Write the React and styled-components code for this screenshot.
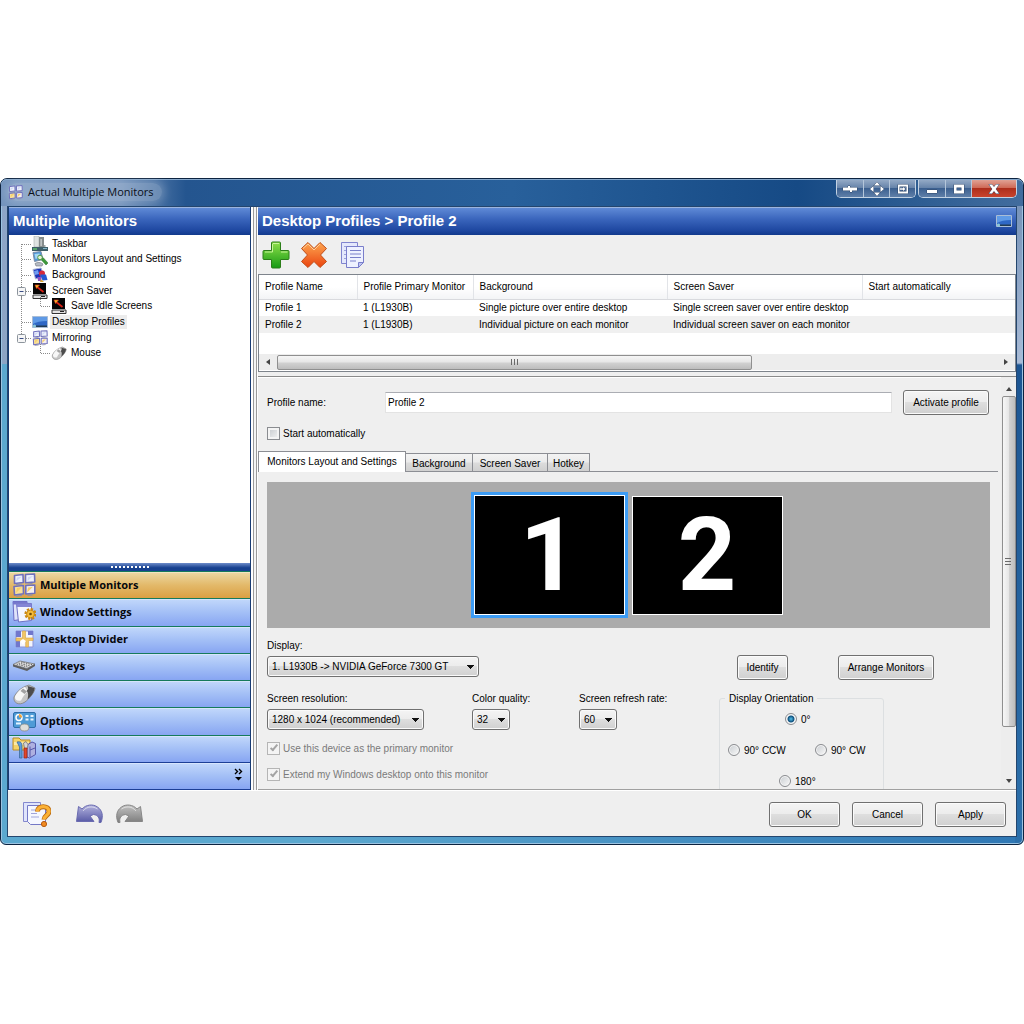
import React, { useState } from "react";
import styled, { createGlobalStyle, css } from "styled-components";

const uiFont = '"Liberation Sans", Arial, sans-serif';
const digitFont = 'Roboto, "Liberation Sans", Arial, sans-serif';
const segoe = '"Open Sans", "Noto Sans", sans-serif';
const buttonFace = "linear-gradient(#f4f4f4 0%, #ececec 48%, #dedede 50%, #d0d0d0 100%)";
const blueBar = "linear-gradient(#5f8ad6 0%, #3b66bd 40%, #1d469f 85%, #123a8c 100%)";

const GlobalStyle = createGlobalStyle`
  *, *::before, *::after { box-sizing: border-box; }
  body { margin: 0; background: #fff; font: 10px/13px ${uiFont}; color: #000; }
  button, input, select { font: inherit; color: inherit; margin: 0; }
  svg { display: block; flex: none; }
`;

const Page = styled.div`
  padding: 178px 0;
`;

const Window = styled.div`
  display: flex;
  flex-direction: column;
  border: 1px solid #0c2340;
  border-radius: 7px 7px 6px 6px;
  background:
    linear-gradient(90deg, #7fb3d6 0 1px, transparent 1px),
    linear-gradient(#8ea6c8 0, #8ca4c4 185px, transparent 185px) left / 50% 100% no-repeat,
    linear-gradient(#6f8db4 0, #a9bbd6 184px, #1c5592 186px, #2c70ab 100%) right / 8px 100% no-repeat,
    linear-gradient(90deg, #5ba8cf, #5ba8cf 30%, #2f77b4);
  box-shadow: inset 0 0 0 1px #9cc3e0;
`;

const TitleBar = styled.header`
  display: flex;
  align-items: center;
  justify-content: space-between;
  height: 27px;
  padding: 0 6px 2px 7px;
  border-radius: 6px 6px 0 0;
  border-top: 1px solid #86a8cc;
  background: linear-gradient(90deg, #7494bd 0, #6f8fb9 120px, #24558f 185px, #28609b 50%, #164a85 78%, #426d9e 100%);
`;

const Caption = styled.h1`
  display: flex;
  align-items: center;
  gap: 5px;
  margin: 0;
  padding: 0 8px 0 0;
  border-radius: 10px;
  font: 11px/18px ${segoe};
  color: #0a0f18;
  background: rgba(255, 255, 255, 0.22);
  box-shadow: 0 0 8px 3px rgba(255, 255, 255, 0.2);
`;

const CaptionButtons = styled.div`
  display: flex;
  align-self: flex-start;
  gap: 2px;
`;

const CaptionGroup = styled.div`
  display: flex;
  border: 1px solid #c3d2e3;
  border-top: 0;
  border-radius: 0 0 5px 5px;
  overflow: hidden;
`;

const CaptionButton = styled.button`
  display: flex;
  align-items: center;
  justify-content: center;
  width: ${(p) => (p.$close ? 45 : 26)}px;
  height: 17px;
  padding: 0;
  border: 0;
  border-left: 1px solid #b4c6da;
  background: ${(p) =>
    p.$close
      ? "linear-gradient(#e0a294 0%, #cf6b58 45%, #ad2f1c 50%, #c9442d 100%)"
      : "linear-gradient(#93a9c5 0%, #6784aa 45%, #3c6090 50%, #5f7fa8 100%)"};
  &:first-child { border-left: 0; }
`;

const Client = styled.div`
  display: flex;
  flex-direction: column;
  margin: 0 6px 7px;
  border: 1px solid #24466e;
  background: #efefef;
`;

const Columns = styled.div`
  display: flex;
  height: 583px;
`;

const Sidebar = styled.aside`
  display: flex;
  flex-direction: column;
  flex: none;
  width: 243px;
  border: solid #173a72;
  border-width: 0 1px;
  background: #fff;
`;

const SplitBar = styled.div`
  flex: none;
  width: 7px;
  border: solid #fff;
  border-width: 0 1px 0 2px;
  background: linear-gradient(90deg, #9a9a9a 0 1px, #f4f4f4 1px 3px, #9a9a9a 3px);
`;

const PanelTitle = styled.h2`
  display: flex;
  align-items: center;
  justify-content: space-between;
  flex: none;
  height: 28px;
  margin: 0;
  padding: 0 4px 2px;
  border-top: 1px solid #9bb4de;
  font: bold 15px/20px ${uiFont};
  color: #fff;
  background: ${blueBar};
`;

const TreeBody = styled.div`
  flex: 1;
  padding: 1px 0 0 7px;
`;

const TreeList = styled.ul`
  display: grid;
  grid-auto-rows: 1fr;
  height: 125px;
  margin: 0;
  padding: 0;
  list-style: none;
`;

const TreeItem = styled.li`
  display: flex;
  align-items: center;
  min-height: 0;
  svg { margin: -1px 0; }
`;

const TreeLabel = styled.span`
  margin-left: 2px;
  padding: 0 2px;
  line-height: 14px;
  background: ${(p) => (p.$selected ? "#ececec" : "transparent")};
`;

const Grip = styled.div`
  display: flex;
  justify-content: center;
  align-items: center;
  flex: none;
  height: 8px;
  background: linear-gradient(#6d8cca, #16408f 60%);
`;

const NavList = styled.nav`
  display: flex;
  flex-direction: column;
  flex: none;
  height: 219px;
`;

const NavButton = styled.button`
  display: flex;
  align-items: center;
  flex: 1;
  min-height: 0;
  gap: 4px;
  padding: 0 3px 1px;
  border: 0;
  border-top: 1px solid #167a5c;
  box-shadow: inset 0 1px 0 rgba(255, 255, 255, 0.35);
  font: bold 11px/16px ${segoe};
  color: #05070c;
  text-align: left;
  background: ${(p) =>
    p.$active
      ? "linear-gradient(#ecd9a5 0%, #e3b96a 50%, #dba044 100%)"
      : "linear-gradient(#c2d8fb 0%, #a3bff6 50%, #87a5f2 100%)"};
`;

const NavMore = styled(NavButton)`
  justify-content: flex-end;
  padding-right: 6px;
  border-top-color: #1c3f96;
  border-bottom: 1px solid #1c3f96;
`;

const Main = styled.main`
  display: flex;
  flex-direction: column;
  flex: 1;
  min-width: 0;
`;

const Toolbar = styled.div`
  display: flex;
  align-items: center;
  gap: 10px;
  flex: none;
  height: 39px;
  padding: 0 4px;
`;

const ToolButton = styled.button`
  display: flex;
  padding: 0;
  border: 0;
  background: transparent;
`;

const ListBox = styled.section`
  display: flex;
  flex-direction: column;
  flex: none;
  height: 98px;
  padding-bottom: 1px;
  border: 1px solid #7e848c;
  background: #fff;
`;

const ListScroll = styled.div`
  flex: 1;
  overflow: hidden;
`;

const Table = styled.table`
  width: 100%;
  table-layout: fixed;
  border-collapse: collapse;
  th, td {
    padding: 0 0 0 6px;
    font-weight: normal;
    text-align: left;
    white-space: nowrap;
  }
  th {
    height: 24px;
    border-right: 1px solid #e2e4e8;
    border-bottom: 1px solid #d9dade;
    background: linear-gradient(#fff 50%, #f3f4f6);
  }
  th:last-child { border-right: 0; }
`;

const Col = styled.col`
  width: ${(p) => (p.$w ? `${p.$w}px` : "auto")};
`;

const Row = styled.tr`
  height: 17px;
  background: ${(p) => (p.$selected ? "#f0f0f0" : "#fff")};
`;

const HScroll = styled.div`
  display: flex;
  align-items: center;
  flex: none;
  height: 16px;
  background: #ededed;
`;

const ScrollArrow = styled.button`
  display: flex;
  align-items: center;
  justify-content: center;
  flex: none;
  width: ${(p) => (p.$vertical ? 15 : 18)}px;
  height: 15px;
  padding: 0;
  border: 0;
  background: transparent;
`;

const HTrack = styled.div`
  flex: 1;
`;

const Thumb = styled.div`
  display: flex;
  align-items: center;
  justify-content: center;
  border: 1px solid #8f8f8f;
  border-radius: 2px;
  ${(p) =>
    p.$vertical
      ? css`
          width: 14px;
          height: 331px;
          background: linear-gradient(90deg, #f6f6f6 0%, #e6e6e6 48%, #d2d2d2 52%, #bdbdbd 100%);
        `
      : css`
          width: 66%;
          height: 15px;
          background: linear-gradient(#f6f6f6 0%, #e6e6e6 48%, #d2d2d2 52%, #bdbdbd 100%);
        `}
`;

const FormArea = styled.section`
  display: flex;
  flex: 1;
  min-height: 0;
  margin-top: 4px;
  border-top: 1px solid #8b8b8b;
  border-bottom: 1px solid #a0a0a0;
  box-shadow: inset 0 1px 0 #fff;
`;

const Form = styled.form`
  flex: 1;
  min-width: 0;
  overflow: hidden;
  padding-top: 13px;
`;

const VScroll = styled.div`
  display: flex;
  flex-direction: column;
  align-items: center;
  justify-content: space-between;
  flex: none;
  width: 15px;
  margin-left: 3px;
  padding: 4px 0 1px;
  background: #ededed;
`;

const VTrack = styled.div`
  flex: 1;
`;

const NameRow = styled.div`
  display: flex;
  align-items: center;
  padding: 0 9px;
`;

const NameLabel = styled.label`
  width: 118px;
`;

const TextField = styled.input`
  flex: 1;
  min-width: 0;
  height: 21px;
  padding: 0 2px;
  border: 1px solid #e3e3e3;
  border-top-color: #abadb3;
  background: #fff;
`;

const Button = styled.button`
  height: 25px;
  padding: 0;
  width: ${(p) => p.$w}px;
  border: 1px solid #707070;
  border-radius: 3px;
  box-shadow: inset 0 0 0 1px #fbfbfb;
  background: ${buttonFace};
  white-space: nowrap;
`;

const ActivateButton = styled(Button)`
  margin-left: 11px;
`;

const CheckLabel = styled.label`
  display: flex;
  align-items: center;
  gap: 3px;
  height: 14px;
  color: ${(p) => (p.$disabled ? "#7a7a7a" : "#000")};
`;

const checkMark = css`
  &:checked::before {
    content: "";
    width: 4px;
    height: 8px;
    margin-bottom: 2px;
    border: solid #a4a4a4;
    border-width: 0 2px 2px 0;
    transform: rotate(40deg);
  }
`;

const CheckBox = styled.input.attrs({ type: "checkbox" })`
  appearance: none;
  display: flex;
  align-items: center;
  justify-content: center;
  width: 13px;
  height: 13px;
  border: 1px solid ${(p) => (p.disabled ? "#b5b5b5" : "#8a8c90")};
  box-shadow: inset 0 0 0 2px #f4f4f4;
  background: ${(p) => (p.disabled ? "#f4f4f4" : "linear-gradient(135deg, #c4c8cc, #f6f6f6)")};
  ${checkMark}
`;

const AutoStart = styled.div`
  padding: 11px 9px;
`;

const Tabs = styled.div`
  display: flex;
  align-items: flex-end;
  height: 21px;
  border-bottom: 1px solid #8c8e94;
`;

const Tab = styled.button`
  height: ${(p) => (p.$active ? 21 : 18)}px;
  width: ${(p) => p.$w}px;
  margin-bottom: ${(p) => (p.$active ? -1 : 0)}px;
  padding: ${(p) => (p.$active ? "0 0 1px" : "1px 0 0")};
  border: 1px solid #8c8e94;
  border-bottom: 0;
  margin-right: -1px;
  background: ${(p) => (p.$active ? "#fff" : "linear-gradient(#f3f3f3 0%, #ebebeb 48%, #dcdcdc 52%, #d0d0d0 100%)")};
  white-space: nowrap;
`;

const Arrangement = styled.div`
  display: flex;
  align-items: center;
  justify-content: center;
  gap: 4px;
  height: 146px;
  margin: 10px 8px 11px 9px;
  padding-right: 4px;
  background: #ababab;
`;

const Monitor = styled.button`
  display: flex;
  align-items: center;
  justify-content: center;
  width: ${(p) => (p.$selected ? 157 : 151)}px;
  height: ${(p) => (p.$selected ? 126 : 119)}px;
  padding: 0;
  border: ${(p) => (p.$selected ? "3px solid #3c9cf5" : "1px solid #fff")};
  box-shadow: ${(p) => (p.$selected ? "inset 0 0 0 1px #fff" : "none")};
  background: #000;
  color: #fff;
  font: bold 102px/118px ${digitFont};
`;

const Settings = styled.div`
  padding: 0 9px;
`;

const DisplayRow = styled.div`
  display: flex;
  align-items: flex-end;
  margin-bottom: 15px;
`;

const Field = styled.div`
  display: flex;
  flex-direction: column;
  align-items: flex-start;
  gap: 4px;
  width: ${(p) => (p.$w ? `${p.$w}px` : "auto")};
`;

const Select = styled.select`
  appearance: none;
  width: ${(p) => p.$w}px;
  height: 21px;
  padding: 0 12px 0 4px;
  border: 1px solid #707070;
  border-radius: 3px;
  box-shadow: inset 0 0 0 1px #fafafa;
  background:
    linear-gradient(#111, #111) right 4px top 8px / 7px 1px no-repeat,
    linear-gradient(#111, #111) right 5px top 9px / 5px 1px no-repeat,
    linear-gradient(#111, #111) right 6px top 10px / 3px 1px no-repeat,
    linear-gradient(#111, #111) right 7px top 11px / 1px 1px no-repeat,
    ${buttonFace};
`;

const DisplayButtons = styled.div`
  display: flex;
  gap: 50px;
  margin: 0 55px -3px auto;
`;

const ModeRow = styled.div`
  display: flex;
  justify-content: space-between;
  align-items: flex-start;
`;

const ModeColumn = styled.div`
  display: flex;
  flex-direction: column;
  gap: 12px;
`;

const ModeFields = styled.div`
  display: flex;
  margin-bottom: -1px;
`;

const Orientation = styled.fieldset`
  display: grid;
  grid-template-columns: 87px 1fr;
  row-gap: 17px;
  width: 165px;
  height: 130px;
  margin: 0 105px 0 0;
  padding: 7px 0 0 8px;
  align-content: start;
  border: 1px solid #dcdfe1;
  border-radius: 3px;
  legend { margin-left: -3px; padding: 0 4px; }
`;

const RadioLabel = styled.label`
  display: flex;
  align-items: center;
  gap: 4px;
  height: 14px;
  ${(p) => p.$indent && css`grid-column: 1 / -1; padding-left: ${p.$indent}px;`}
`;

const Radio = styled.input.attrs({ type: "radio" })`
  appearance: none;
  width: 12px;
  height: 12px;
  border: 1px solid #8a8c90;
  border-radius: 50%;
  box-shadow: inset 0 0 0 1px #f6f6f6;
  background: linear-gradient(135deg, #c8ccd0, #fafafa);
  &:checked {
    background: radial-gradient(circle at 5px 5px, #55c3ee 0, #0f4f7c 3px, #f3f6f8 4px);
  }
`;

const Footer = styled.footer`
  display: flex;
  align-items: center;
  justify-content: space-between;
  height: 46px;
  padding: 2px 10px 0 15px;
  border-top: 1px solid #fff;
`;

const FooterTools = styled.div`
  display: flex;
  align-items: center;
  button:nth-child(2) { margin: 0 11px 0 25px; }
`;

const DialogButtons = styled.div`
  display: flex;
  gap: 12px;
`;

/* ---------- drawings ---------- */

const Dots = ({ d }) => <path d={d} stroke="#8a8a8a" strokeDasharray="1 1" fill="none" />;

function Branch({ kind }) {
  return (
    <svg width="16" height="18" viewBox="0 0 16 18">
      <Dots d={kind === "first" ? "M5.5 9V18" : kind === "last" ? "M5.5 0V9" : "M5.5 0V18"} />
      <Dots d="M6 9.5H16" />
      {(kind === "last" || kind === "open") && (
        <>
          <rect x="1.5" y="5.5" width="8" height="8" rx="1" fill="#f6f6f6" stroke="#8c949c" />
          <path d="M3.5 9.5h4" stroke="#3b4f86" />
        </>
      )}
    </svg>
  );
}

function ChildBranch({ trunk }) {
  return (
    <svg width="35" height="18" viewBox="0 0 35 18">
      {trunk && <Dots d="M5.5 0V18" />}
      <Dots d="M24.5 0V9" />
      <Dots d="M25 9.5H35" />
    </svg>
  );
}

const Svg16 = ({ children, size = 16 }) => (
  <svg width={size} height={size} viewBox="0 0 16 16">
    {children}
  </svg>
);

const TaskbarIcon = () => (
  <Svg16>
    <path d="M2 0h5v11H2z" fill="#dfe3e2" stroke="#a9b0b0" strokeWidth=".6" />
    <path d="M7 1h5v10H7z" fill="#858b8b" />
    <path d="M8.500 3h1.200v7H8.500z" fill="#d6dada" />
    <path d="M12 9h1.500v2H12z" fill="#9ea6a6" />
    <path d="M0 11h16v4H0z" fill="#3e5e68" />
    <path d="M1 12h4v2H1z" fill="#57a56c" />
    <path d="M11 12h4v1h-4z" fill="#85b5c8" />
  </Svg16>
);
const LayoutIcon = () => (
  <Svg16>
    <path d="M1 1.500 9 .5l2 8-8.500 2z" fill="#4f97d8" stroke="#7d8ca3" />
    <path d="M2.500 3 7.500 2.500l.8 4-4.800 1.500z" fill="#a6d8f2" />
    <path d="M3 12.500c2-1.500 6-1.500 8 .5l-1 2H4z" fill="#b5bbc4" stroke="#6d747c" strokeWidth=".6" />
    <path d="M8.500 8l5.500 6 2-2-5-5.500z" fill="#3f9a3a" stroke="#27702a" strokeWidth=".5" />
    <circle cx="8" cy="6.500" r="2.300" fill="#e7f4d6" stroke="#4f9a48" />
  </Svg16>
);
const BackgroundIcon = () => (
  <Svg16>
    <path d="M1 2.500 9 1l3 8-8.500 3z" fill="#1c34b8" stroke="#a7b2d6" />
    <path d="M2 4l4-1 1 4-4 1z" fill="#6f9cf0" />
    <circle cx="10" cy="6.500" r="3" fill="#d62a3c" />
    <path d="M8 7.500h6l1.500 5.500-5 .5z" fill="#2459d2" />
    <path d="M5.500 10h4L9 14H6z" fill="#8f4fc0" />
    <path d="M9 12l3 3H8z" fill="#d8a83a" />
  </Svg16>
);
const SaverIcon = () => (
  <Svg16>
    <path d="M1 0h13v11H1z" fill="#050505" />
    <path d="M4.500 3.500l7 5.500" stroke="#d82014" strokeWidth="1.800" />
    <path d="M3 2h4.500L4.500 5.500z" fill="#f6c82a" stroke="#e0301c" strokeWidth=".6" />
    <path d="M1 12h14v3.500H1z" fill="#e4e4e4" stroke="#333" />
    <path d="M9 13.500h4" stroke="#222" />
  </Svg16>
);
const DesktopIcon = ({ size }) => (
  <Svg16 size={size}>
    <path d="M.5 2.500h15v11H.5z" fill="#2f68c6" stroke="#a9bdd6" />
    <path d="M1 3h14v4C9 7 4 8 1 10z" fill="#5f9ae6" />
    <path d="M4 11.500h11V13H4z" fill="#223c55" />
    <circle cx="2.500" cy="12" r="1.600" fill="#8cc8d8" />
  </Svg16>
);
const FourScreens = ({ size = 16 }) => (
  <svg width={size} height={size} viewBox="0 0 24 24">
    <g stroke="#6f70bd" strokeWidth="1.600" strokeLinejoin="round">
      <path d="M2.500 2.500 11 1.500l.3 8-8.800 1z" fill="#eef1fb" />
      <path d="M13.500 1.500 22.500 1l.3 8-9.300.8z" fill="#eef1fb" />
      <path d="M2 13.500l9.300-1 .2 8.300L2.500 22z" fill="#f8e09a" />
      <path d="M13.800 12.500l9-.5v8.200l-9 .8z" fill="#f4eff0" />
    </g>
    <path d="M4 8.500 5 4.500l5-1zM15.500 8l.5-4 5-1z" fill="#cdd8f5" />
    <path d="M4 20l1-5 5-1zM15 19.500l1-5 5-.7z" fill="#f6cf6c" />
    <path d="M4 11.700l6-.7M15.500 11l5-.5M4 23.200l6-.7M15.500 22.300l5-.5" stroke="#8f90a8" strokeWidth="1.200" />
  </svg>
);
const MouseIcon = ({ size = 16 }) => (
  <svg width={size} height={size} viewBox="0 0 24 24">
    <path d="M2 15C5 9 10 5 17 3l6 3c0 4-6 11-10 14-6 4-12 1-11-5z" fill="#c6c6c6" stroke="#808080" strokeWidth=".8" />
    <path d="M3 14.500C6 9 9 6.500 13 5l3 4.500c-3 2-5 5-7 9-4 1-6.500-1-6-4z" fill="#f7f7f7" />
    <path d="M15.500 4l7 2c0 4-3 8-7 11.500 1-4.500 1-7-1-8.500 2-1.500 2-3 1-5z" fill="#4c4c4c" />
    <path d="M11 6.500l4 3-2.500 2.500-4-3z" fill="#a2a2a2" />
  </svg>
);
const WindowsIcon = () => (
  <svg width="24" height="24" viewBox="0 0 24 24">
    <path d="M1 1.500h14v17l-13 2z" fill="#dfe3fa" stroke="#6b6bc4" />
    <path d="M1 1.500h14v3H1z" fill="#7577cd" />
    <path d="M4.500 3.500h15v17l-13 1.500z" fill="#f3f5ff" stroke="#7072c4" />
    <path d="M4.500 3.500h15v3.500h-15z" fill="#8385d6" />
    <circle cx="18.500" cy="14" r="4.800" fill="none" stroke="#c98712" strokeWidth="2.500" strokeDasharray="2.300 1.400" />
    <circle cx="18.500" cy="14" r="3.900" fill="#f5bd3c" stroke="#c98712" />
    <circle cx="18.500" cy="14" r="1.300" fill="#6c4a08" />
  </svg>
);
const DividerIcon = () => (
  <svg width="24" height="24" viewBox="0 0 24 24">
    <path d="M4 4h17v16H4z" fill="#f2f4fd" stroke="#8e94d6" />
    <path d="M4 4h5v6H4zM16 4h5v4h-5zM4 14h4v6H4z" fill="#7077cc" />
    <path d="M10.500 4h3v7H21v2.500h-4.500V20h-2.800v-6H4v-3h6.500z" fill="#f0c566" stroke="#d7a445" strokeWidth=".6" />
    <path d="M8 14l3-2 3 2-3 4z" fill="#fff" />
  </svg>
);
const KeyboardIcon = () => (
  <svg width="24" height="24" viewBox="0 0 24 24">
    <path d="M1 10.500 8 7l15 3-8 4.500z" fill="#e2e2e2" stroke="#666" strokeWidth=".7" />
    <path d="M1 10.500l14 4.200 8-4.700v2l-8 5-14-4.500z" fill="#5e5e5e" />
    <path d="M4.500 10l11 3M6.500 9l11.500 3M9 8l11 2.600" stroke="#666" strokeDasharray="1.500 1" />
  </svg>
);
const OptionsIcon = () => (
  <svg width="24" height="24" viewBox="0 0 24 24">
    <rect x="1.500" y="3.500" width="22" height="15" rx="1.500" fill="#4e9bd6" stroke="#2f6fab" />
    <circle cx="7" cy="8.500" r="3" fill="none" stroke="#fff" strokeWidth="1.500" />
    <path d="M7 8.500V5a3 3 0 0 1 3 3.500z" fill="#f2a33a" />
    <path d="M13.500 7h3M18.500 7h3M13.500 10.500h3M18.500 10.500h3M4 14.500h5" stroke="#e6f4ff" strokeWidth="1.800" />
    <ellipse cx="12.500" cy="18.500" rx="4.500" ry="3.500" fill="#dededa" stroke="#8a8a84" strokeWidth=".8" />
  </svg>
);
const ToolsIcon = () => (
  <svg width="24" height="24" viewBox="0 0 24 24">
    <path d="M1 2h6l2 2h9v10H1z" fill="#f4d36a" stroke="#b98c28" />
    <path d="M2 6h15v3H2z" fill="#fbe9a6" />
    <path d="M15 9l5-3 3.500 1.500v11l-6 3.500-2.500-1z" fill="#aeb0e0" stroke="#5456a8" />
    <path d="M18 10.500V21M18 14l5-2" stroke="#5456a8" />
    <path d="M5 6c4-1 5 1 5 4v12H7.500V11z" fill="#5a9bdd" stroke="#35618f" strokeWidth=".7" />
    <path d="M11.500 7l2.500-1.500 2 3-.5 4h-3z" fill="#d5d5d5" stroke="#666" strokeWidth=".7" />
    <path d="M12 12h3v10h-3z" fill="#e0462b" stroke="#962312" strokeWidth=".7" />
  </svg>
);
const PlusIcon = () => (
  <svg width="28" height="28" viewBox="0 0 28 28">
    <defs>
      <linearGradient id="plus" x2="0" y2="1">
        <stop stopColor="#8fe04a" />
        <stop offset="1" stopColor="#169a14" />
      </linearGradient>
    </defs>
    <path
      d="M10.500 1h7q1 0 1 1v7.500H26q1 0 1 1v7q0 1-1 1h-7.500V26q0 1-1 1h-7q-1 0-1-1v-7.500H2q-1 0-1-1v-7q0-1 1-1h7.500V2q0-1 1-1z"
      fill="url(#plus)"
      stroke="#2b7d18"
    />
    <path d="M11 2.500h6M3 11h7.500V3M19 11h6.500" stroke="#c6f598" fill="none" />
  </svg>
);
const CrossIcon = () => (
  <svg width="28" height="28" viewBox="0 0 28 28">
    <defs>
      <linearGradient id="cross" x2="0" y2="1">
        <stop stopColor="#fda650" />
        <stop offset="1" stopColor="#ea4410" />
      </linearGradient>
    </defs>
    <path
      d="M8 1.500 14 7.500 20 1.500 26.500 7.500 20.500 14 26.500 20.500 20 26.500 14 20.500 8 26.500 1.500 20.500 7.500 14 1.500 7.500z"
      fill="url(#cross)"
      stroke="#c04e18"
      strokeLinejoin="round"
    />
    <path d="M3 7.500 8 3l6 6 6-6" stroke="#ffd09a" fill="none" />
  </svg>
);
const CopyIcon = () => (
  <svg width="28" height="28" viewBox="0 0 28 28">
    <path d="M3.500 1.500h16v21h-16z" fill="#e4e8fc" stroke="#8084cf" />
    <path d="M6 5.500h11M6 9.500h3M6 13.500h3M6 17.500h3" stroke="#9ca2dc" />
    <path d="M8.500 5.500h17v16l-5 5h-12z" fill="#eef1ff" stroke="#7a7ecb" />
    <path d="M12 9.500h11M12 13h11M12 16.500h11M12 20h6" stroke="#7a80ca" />
    <path d="M20.500 26.500v-5h5z" fill="#bfc6f2" stroke="#7a7ecb" />
  </svg>
);
const HelpIcon = () => (
  <svg width="28" height="28" viewBox="0 0 28 28">
    <path d="M.5 1.500h17v19H.5z" fill="#dfe4fb" stroke="#8488ce" />
    <path d="M4.500 4.500h18v19h-15l-3-3z" fill="#f5f7ff" stroke="#7478c6" />
    <path d="M8 9h6M8 12.500h6M8 16h8" stroke="#a1a6da" />
    <path d="M14.500 10.500c0-6.500 11.500-6.500 11.500 0 0 4-5 4-5 8" fill="none" stroke="#b96a10" strokeWidth="5" />
    <path d="M14.500 10.500c0-6.500 11.500-6.500 11.500 0 0 4-5 4-5 8" fill="none" stroke="#fbb136" strokeWidth="3.400" />
    <circle cx="21" cy="23" r="2.600" fill="#f08a20" stroke="#b55a10" />
  </svg>
);
const CurveArrow = ({ redo }) => {
  const id = redo ? "redo" : "undo";
  const flip = redo ? "matrix(-1 0 0 1 28 0)" : undefined;
  return (
    <svg width="28" height="24" viewBox="0 0 28 24">
      <defs>
        <linearGradient id={id} x2="0" y2="1">
          <stop stopColor={redo ? "#c2c2c2" : "#b3b3de"} />
          <stop offset="1" stopColor={redo ? "#7d7d7d" : "#5557a4"} />
        </linearGradient>
      </defs>
      <path
        transform={flip}
        d="M2.500 3.500 6 6C10 1.500 17 .8 21.500 4c5 3.500 6 9 3.500 15.500l-2 0C24 15 22 12 17.500 11.500L14 13l4 5.500H.5z"
        fill={`url(#${id})`}
        stroke={redo ? "#868686" : "#6a6bb0"}
        strokeLinejoin="round"
      />
      <path transform={flip} d="M7 8c4-5 10-5 14.500-2" fill="none" stroke="rgba(255,255,255,.55)" />
    </svg>
  );
};

const captionGlyphs = {
  roll: <path d="M1 5.500h5V4h2v1.500h7v3H10V10H8V8.500H1z" />,
  move: <path d="M8 0l3 3.500H5zM8 14l3-3.500H5zM1 7l3.500-3v6zM15 7l-3.500-3v6z" />,
  send: <path fillRule="evenodd" d="M3 2.500h10v9H3zM4.500 4.500v5h7v-5zM5 6.300h3V5l2.500 2L8 9V7.700H5z" />,
  min: <path d="M3 8h10v3H3z" />,
  max: <path fillRule="evenodd" d="M3 2.500h10v9H3zM5.500 5.500v3h5v-3z" />,
  close: <path d="M3 2.500h3L8 5l2-2.500h3L9.700 7l3.300 4.500h-3L8 9l-2 2.500H3L6.300 7z" />,
};
const Glyph = ({ name }) => (
  <svg width="16" height="14" viewBox="0 0 16 14" fill="#fff" stroke="#31486a" strokeWidth="1" paintOrder="stroke">
    {captionGlyphs[name]}
  </svg>
);

const arrows = {
  left: "M6 1v6L2 4z",
  right: "M2 1v6l4-3z",
  up: "M1 6h6L4 2z",
  down: "M1 2h6L4 6z",
};
const Arrow = ({ dir }) => (
  <svg width="8" height="8" viewBox="0 0 8 8">
    <path d={arrows[dir]} fill="#444" />
  </svg>
);
const ThumbMarks = ({ vertical }) => (
  <svg width="9" height="9" viewBox="0 0 9 9">
    <path d={vertical ? "M1 1.500h6M1 4.500h6M1 7.500h6" : "M1.500 1v6M4.500 1v6M7.500 1v6"} stroke="#6a6a6a" />
  </svg>
);

/* ---------- data ---------- */

const treeItems = [
  { label: "Taskbar", icon: <TaskbarIcon />, branch: <Branch kind="first" /> },
  { label: "Monitors Layout and Settings", icon: <LayoutIcon />, branch: <Branch /> },
  { label: "Background", icon: <BackgroundIcon />, branch: <Branch /> },
  { label: "Screen Saver", icon: <SaverIcon />, branch: <Branch kind="open" /> },
  { label: "Save Idle Screens", icon: <SaverIcon />, branch: <ChildBranch trunk /> },
  { label: "Desktop Profiles", icon: <DesktopIcon />, branch: <Branch />, selected: true },
  { label: "Mirroring", icon: <FourScreens />, branch: <Branch kind="last" /> },
  { label: "Mouse", icon: <MouseIcon />, branch: <ChildBranch /> },
];

const navItems = [
  ["Multiple Monitors", <FourScreens size={24} />],
  ["Window Settings", <WindowsIcon />],
  ["Desktop Divider", <DividerIcon />],
  ["Hotkeys", <KeyboardIcon />],
  ["Mouse", <MouseIcon size={24} />],
  ["Options", <OptionsIcon />],
  ["Tools", <ToolsIcon />],
];

const profiles = [
  ["Profile 1", "1 (L1930B)", "Single picture over entire desktop", "Single screen saver over entire desktop", ""],
  ["Profile 2", "1 (L1930B)", "Individual picture on each monitor", "Individual screen saver on each monitor", ""],
];

const tabs = [
  ["Monitors Layout and Settings", 148],
  ["Background", 68],
  ["Screen Saver", 76],
  ["Hotkey", 43],
];

export default function App() {
  const [section, setSection] = useState("Multiple Monitors");
  const [tab, setTab] = useState(0);
  const [monitor, setMonitor] = useState(1);

  return (
    <Page>
      <GlobalStyle />
      <Window>
        <TitleBar>
          <Caption>
            <FourScreens size={15} />
            Actual Multiple Monitors
          </Caption>
          <CaptionButtons>
            <CaptionGroup>
              <CaptionButton aria-label="Roll up"><Glyph name="roll" /></CaptionButton>
              <CaptionButton aria-label="Move"><Glyph name="move" /></CaptionButton>
              <CaptionButton aria-label="Send to monitor"><Glyph name="send" /></CaptionButton>
            </CaptionGroup>
            <CaptionGroup>
              <CaptionButton aria-label="Minimize"><Glyph name="min" /></CaptionButton>
              <CaptionButton aria-label="Maximize"><Glyph name="max" /></CaptionButton>
              <CaptionButton $close aria-label="Close"><Glyph name="close" /></CaptionButton>
            </CaptionGroup>
          </CaptionButtons>
        </TitleBar>

        <Client>
          <Columns>
            <Sidebar>
              <PanelTitle>Multiple Monitors</PanelTitle>
              <TreeBody>
                <TreeList>
                  {treeItems.map((t) => (
                    <TreeItem key={t.label}>
                      {t.branch}
                      {t.icon}
                      <TreeLabel $selected={t.selected}>{t.label}</TreeLabel>
                    </TreeItem>
                  ))}
                </TreeList>
              </TreeBody>
              <Grip>
                <svg width="40" height="2" viewBox="0 0 40 2">
                  <path d="M1 1h38" stroke="#fff" strokeWidth="2" strokeDasharray="2 2" />
                </svg>
              </Grip>
              <NavList>
                {navItems.map(([label, icon]) => (
                  <NavButton key={label} $active={label === section} onClick={() => setSection(label)}>
                    {icon}
                    {label}
                  </NavButton>
                ))}
                <NavMore aria-label="Configure buttons">
                  <svg width="10" height="14" viewBox="0 0 10 14">
                    <path d="M1 1l2.500 2.500L1 6M5 1l2.500 2.500L5 6" fill="none" stroke="#000" strokeWidth="1.400" />
                    <path d="M1 9h7L4.500 12.500z" fill="#000" />
                  </svg>
                </NavMore>
              </NavList>
            </Sidebar>
            <SplitBar />

            <Main>
              <PanelTitle>
                Desktop Profiles &gt; Profile 2
                <DesktopIcon size={16} />
              </PanelTitle>
              <Toolbar>
                <ToolButton aria-label="Add profile"><PlusIcon /></ToolButton>
                <ToolButton aria-label="Delete profile"><CrossIcon /></ToolButton>
                <ToolButton aria-label="Copy profile"><CopyIcon /></ToolButton>
              </Toolbar>

              <ListBox>
                <ListScroll>
                  <Table>
                    <colgroup>
                      <Col $w={98} />
                      <Col $w={116} />
                      <Col $w={194} />
                      <Col $w={195} />
                      <Col />
                    </colgroup>
                    <thead>
                      <tr>
                        <th>Profile Name</th>
                        <th>Profile Primary Monitor</th>
                        <th>Background</th>
                        <th>Screen Saver</th>
                        <th>Start automatically</th>
                      </tr>
                    </thead>
                    <tbody>
                      {profiles.map((cells, i) => (
                        <Row key={cells[0]} $selected={i === 1}>
                          {cells.map((c, j) => (
                            <td key={j}>{c}</td>
                          ))}
                        </Row>
                      ))}
                    </tbody>
                  </Table>
                </ListScroll>
                <HScroll>
                  <ScrollArrow type="button" aria-label="Scroll left"><Arrow dir="left" /></ScrollArrow>
                  <HTrack>
                    <Thumb><ThumbMarks /></Thumb>
                  </HTrack>
                  <ScrollArrow type="button" aria-label="Scroll right"><Arrow dir="right" /></ScrollArrow>
                </HScroll>
              </ListBox>

              <FormArea>
                <Form onSubmit={(e) => e.preventDefault()}>
                  <NameRow>
                    <NameLabel htmlFor="profile-name">Profile name:</NameLabel>
                    <TextField id="profile-name" defaultValue="Profile 2" />
                    <ActivateButton type="button" $w={86}>Activate profile</ActivateButton>
                  </NameRow>
                  <AutoStart>
                    <CheckLabel>
                      <CheckBox />
                      Start automatically
                    </CheckLabel>
                  </AutoStart>

                  <Tabs role="tablist">
                    {tabs.map(([label, w], i) => (
                      <Tab
                        key={label}
                        type="button"
                        role="tab"
                        aria-selected={i === tab}
                        $active={i === tab}
                        $w={w}
                        onClick={() => setTab(i)}
                      >
                        {label}
                      </Tab>
                    ))}
                  </Tabs>

                  <Arrangement>
                    {[1, 2].map((n) => (
                      <Monitor key={n} type="button" $selected={n === monitor} onClick={() => setMonitor(n)}>
                        {n}
                      </Monitor>
                    ))}
                  </Arrangement>

                  <Settings>
                    <DisplayRow>
                      <Field>
                        <label htmlFor="display">Display:</label>
                        <Select id="display" $w={212}>
                          <option>1. L1930B -&gt; NVIDIA GeForce 7300 GT</option>
                        </Select>
                      </Field>
                      <DisplayButtons>
                        <Button type="button" $w={51}>Identify</Button>
                        <Button type="button" $w={96}>Arrange Monitors</Button>
                      </DisplayButtons>
                    </DisplayRow>

                    <ModeRow>
                      <ModeColumn>
                        <ModeFields>
                          <Field $w={205}>
                            <label htmlFor="resolution">Screen resolution:</label>
                            <Select id="resolution" $w={157}>
                              <option>1280 x 1024 (recommended)</option>
                            </Select>
                          </Field>
                          <Field $w={107}>
                            <label htmlFor="quality">Color quality:</label>
                            <Select id="quality" $w={38}>
                              <option>32</option>
                            </Select>
                          </Field>
                          <Field>
                            <label htmlFor="refresh">Screen refresh rate:</label>
                            <Select id="refresh" $w={38}>
                              <option>60</option>
                            </Select>
                          </Field>
                        </ModeFields>
                        <CheckLabel $disabled>
                          <CheckBox defaultChecked disabled />
                          Use this device as the primary monitor
                        </CheckLabel>
                        <CheckLabel $disabled>
                          <CheckBox defaultChecked disabled />
                          Extend my Windows desktop onto this monitor
                        </CheckLabel>
                      </ModeColumn>

                      <Orientation>
                        <legend>Display Orientation</legend>
                        <RadioLabel $indent={57}><Radio name="orientation" defaultChecked />0°</RadioLabel>
                        <RadioLabel><Radio name="orientation" />90° CCW</RadioLabel>
                        <RadioLabel><Radio name="orientation" />90° CW</RadioLabel>
                        <RadioLabel $indent={51}><Radio name="orientation" />180°</RadioLabel>
                      </Orientation>
                    </ModeRow>
                  </Settings>
                </Form>
                <VScroll>
                  <ScrollArrow type="button" $vertical aria-label="Scroll up"><Arrow dir="up" /></ScrollArrow>
                  <VTrack>
                    <Thumb $vertical><ThumbMarks vertical /></Thumb>
                  </VTrack>
                  <ScrollArrow type="button" $vertical aria-label="Scroll down"><Arrow dir="down" /></ScrollArrow>
                </VScroll>
              </FormArea>
            </Main>
          </Columns>

          <Footer>
            <FooterTools>
              <ToolButton aria-label="Help"><HelpIcon /></ToolButton>
              <ToolButton aria-label="Undo"><CurveArrow /></ToolButton>
              <ToolButton aria-label="Redo"><CurveArrow redo /></ToolButton>
            </FooterTools>
            <DialogButtons>
              <Button type="button" $w={71}>OK</Button>
              <Button type="button" $w={71}>Cancel</Button>
              <Button type="button" $w={71}>Apply</Button>
            </DialogButtons>
          </Footer>
        </Client>
      </Window>
    </Page>
  );
}
